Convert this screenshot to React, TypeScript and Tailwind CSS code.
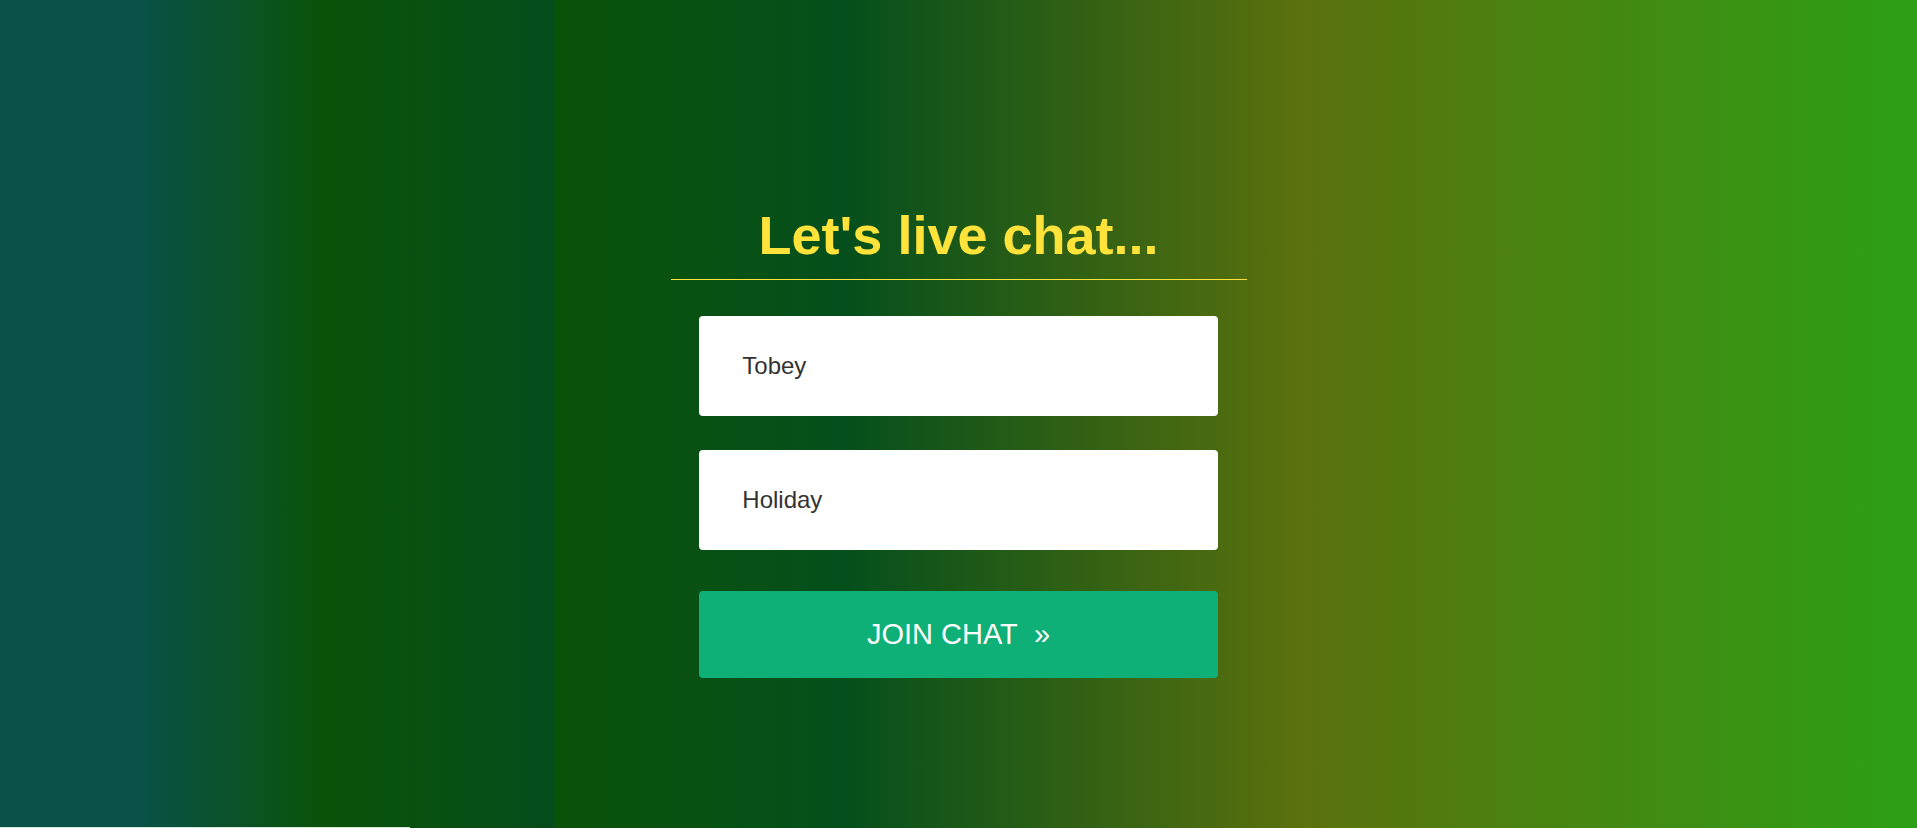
const App = () => {
  return (
    <div className="min-h-screen h-[828px] flex flex-col bg-[linear-gradient(to_right,#0a514a_0%,#0a514a_7%,#0b5309_17%,#064c1c_28.9%,#0b5309_28.95%,#054f1c_44%,#5b710d_68%,#2ca016_100%)] font-['Liberation_Sans',Arial,sans-serif] overflow-hidden">
      <main className="w-[576px] mx-auto pt-[204px]">
        {/* Titulo */}
        <h1 className="text-center font-bold text-[54px] leading-[62px] text-[#ffe33b]">
          Let's live chat...
        </h1>
        <div className="mt-[13px] h-px bg-[#ffe33b]" />

        {/* Formulario */}
        <form className="w-[90%] mx-auto mt-[36px] flex flex-col">
          <input
            type="text"
            defaultValue="Tobey"
            className="h-[100px] w-full rounded bg-white px-[43px] text-[24px] text-[#333] outline-none"
          />
          <input
            type="text"
            defaultValue="Holiday"
            className="mt-[34px] h-[100px] w-full rounded bg-white px-[43px] text-[24px] text-[#333] outline-none"
          />
          <button
            type="button"
            className="mt-[41px] h-[87px] w-full rounded bg-[#0eb077] text-white text-[29px] flex items-center justify-center"
          >
            JOIN CHAT&nbsp; »
          </button>
        </form>
      </main>
      <div className="flex-1" />
      <div className="w-[410px] h-px bg-[#d6e4da]" />
    </div>
  );
};

export default App;
